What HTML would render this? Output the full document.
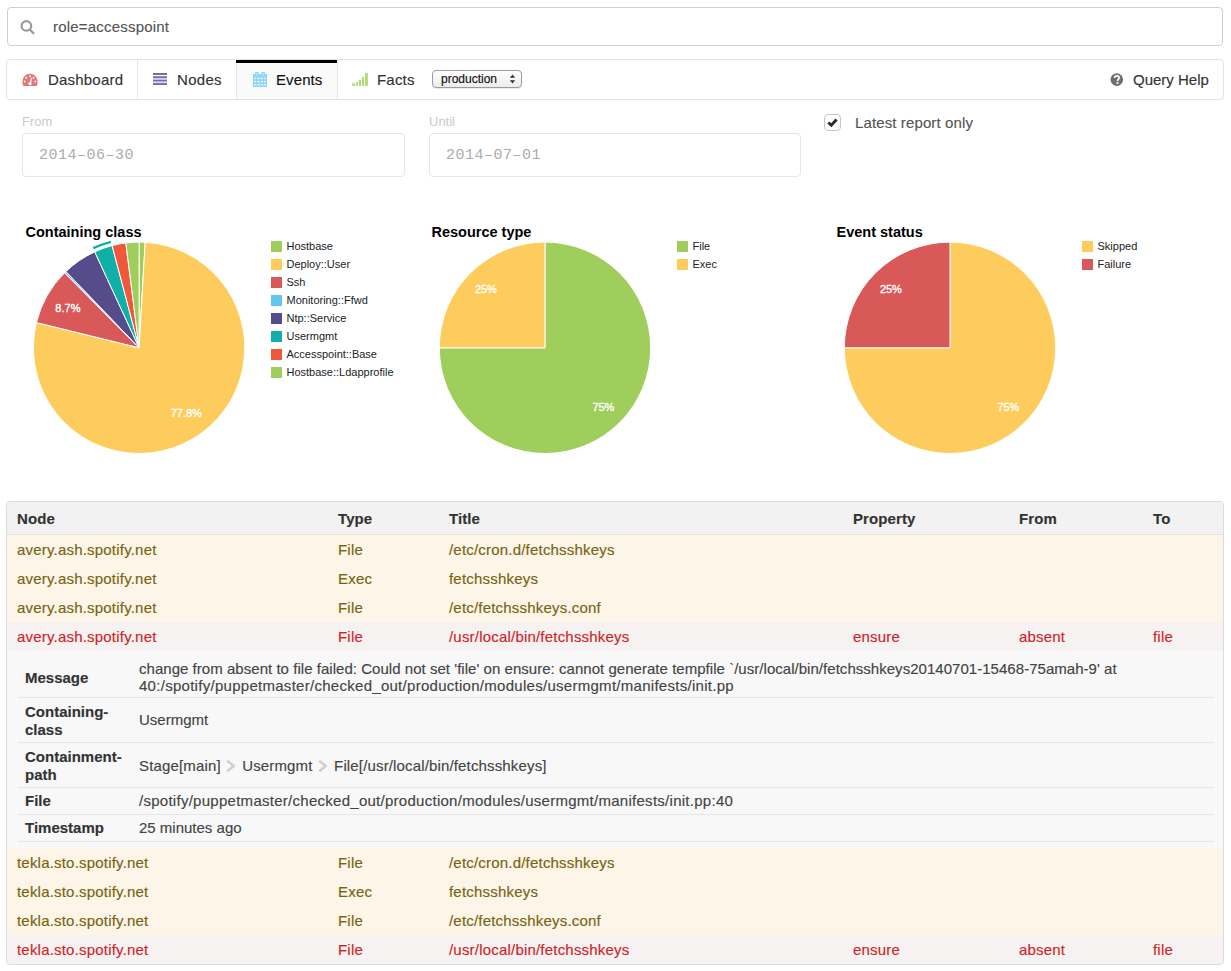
<!DOCTYPE html>
<html><head><meta charset="utf-8">
<style>
*{box-sizing:border-box;margin:0;padding:0}
html,body{width:1231px;height:971px;overflow:hidden;background:#fff}
body{font-family:"Liberation Sans",sans-serif;font-size:15px;color:#333;position:relative;-webkit-text-stroke:0.15px currentColor}
.a{position:absolute;white-space:nowrap}
.t15{font-size:15px;line-height:20px}
#search{left:7px;top:7px;width:1216px;height:39px;border:1px solid #cfcfcf;border-radius:4px}
#nav{left:6px;top:59px;width:1218px;height:41px;border:1px solid #e3e3e3;border-radius:4px;background:#fff}
.sep{position:absolute;top:0;width:1px;height:39px;background:#e7e7e7}
.lbl{font-size:13px;line-height:18px;color:#cacaca;-webkit-text-stroke:0}
.inp{border:1px solid #e6e6e6;border-radius:4px;height:44px}
.mono{font-family:"Liberation Mono",monospace;font-size:15px;line-height:20px;color:#ababab;letter-spacing:0.5px;-webkit-text-stroke:0}
.ctitle{font-weight:bold;font-size:14.5px;line-height:18px;color:#000}
.leg{font-size:11px;line-height:14px;color:#222}
.sw{position:absolute;width:11px;height:11px}
#panel{left:6px;top:501px;width:1218px;height:464px;border:1px solid #dcdcdc;border-radius:4px;overflow:hidden;background:#fff}
.row{position:absolute;left:0;width:1216px;height:29px}
.warn{background:#fcf5e8;color:#776411}
.dang{background:#f7f2f2;color:#cf1f27}
.cell{position:absolute;top:0;line-height:29px;font-size:15px;letter-spacing:0.2px}
.th{font-weight:bold;color:#333;line-height:34px;letter-spacing:0.1px}
.dt{position:absolute;left:11px;width:1194px;border-bottom:1px solid #e6e6e6}
.dk{position:absolute;left:18px;font-weight:bold;font-size:15px;line-height:18px;color:#333}
.chev{display:inline-block;width:9px;height:12px;margin:0 7px 0 5.5px;vertical-align:-1px}
.dv{position:absolute;left:132px;font-size:15px;line-height:18px;color:#444}
.hl{position:absolute;left:11px;width:1196px;height:1px;background:#e6e6e6}
</style></head><body>

<!-- search -->
<div id="search" class="a"></div>
<svg class="a" style="left:18px;top:18px" width="20" height="20" viewBox="0 0 20 20">
  <circle cx="8.4" cy="7.9" r="4.8" fill="none" stroke="#9a9a9a" stroke-width="2.2"/>
  <line x1="11.8" y1="11.4" x2="15.5" y2="15.2" stroke="#9a9a9a" stroke-width="2.2" stroke-linecap="round"/>
</svg>
<div class="a t15" style="left:53px;top:17px;color:#555;letter-spacing:0.2px">role=accesspoint</div>

<!-- nav -->
<div id="nav" class="a">
  <div class="sep" style="left:130px"></div>
  <div class="sep" style="left:229px"></div>
  <div style="position:absolute;left:230px;top:0;width:100px;height:39px;background:#fafafa"></div>
  <div style="position:absolute;left:229px;top:0;width:101px;height:3px;background:#000"></div>
  <div class="sep" style="left:330px"></div>
</div>
<!-- dashboard icon -->
<svg class="a" style="left:22px;top:73px" width="16" height="14" viewBox="0 0 16 14">
  <path d="M1.3 13 C0.6 11.6 0.4 10 0.4 8.4 A7.6 7.6 0 0 1 15.6 8.4 C15.6 10 15.4 11.6 14.7 13 Z" fill="#e27a7a"/>
  <g fill="#fff">
  <rect x="7.2" y="2.5" width="1.7" height="1.6"/>
  <rect x="3.5" y="4" width="1.6" height="1.6"/>
  <rect x="10.8" y="4" width="1.6" height="1.6"/>
  <rect x="1.9" y="7.7" width="1.6" height="1.6"/>
  <rect x="12.5" y="7.7" width="1.6" height="1.6"/>
  <circle cx="8" cy="10.6" r="1.6"/>
  </g>
  <path d="M9.6 4.8 L8.3 10.4" stroke="#fff" stroke-width="1.2"/>
</svg>
<div class="a t15" style="left:48px;top:70px;color:#333;letter-spacing:0.2px">Dashboard</div>
<!-- nodes icon -->
<svg class="a" style="left:153px;top:73px" width="14" height="12" viewBox="0 0 14 12">
  <rect x="0" y="3" width="14" height="9" fill="#dcd9ea"/>
  <rect x="0" y="0" width="14" height="2" fill="#766ea6"/>
  <rect x="0" y="3.3" width="14" height="1.8" fill="#766ea6"/>
  <rect x="0" y="6.8" width="14" height="1.6" fill="#766ea6"/>
  <rect x="0" y="10.1" width="14" height="1.9" fill="#766ea6"/>
</svg>
<div class="a t15" style="left:177px;top:70px;color:#333;letter-spacing:0.3px">Nodes</div>
<!-- events icon -->
<svg class="a" style="left:253px;top:72px" width="14" height="15" viewBox="0 0 14 15">
  <path d="M0 2 H2 V0 H5.5 V2 H8.5 V0 H12 V2 H14 V15 H0 Z" fill="#8fd6f5"/>
  <rect x="3.1" y="1.1" width="0.9" height="2.4" rx="0.45" fill="#d6f0fc"/><rect x="9.9" y="1.1" width="0.9" height="2.4" rx="0.45" fill="#d6f0fc"/>
  <g fill="#e9f7fd">
    <rect x="1.3" y="5.8" width="1.8" height="1.3"/><rect x="4.2" y="5.8" width="2.8" height="1.3"/><rect x="8" y="5.8" width="2" height="1.3"/><rect x="11" y="5.8" width="1.8" height="1.3"/>
    <rect x="1.3" y="9" width="1.8" height="1.3"/><rect x="4.2" y="9" width="2.8" height="1.3"/><rect x="8" y="9" width="2" height="1.3"/><rect x="11" y="9" width="1.8" height="1.3"/>
    <rect x="1.3" y="12.2" width="1.8" height="1.3"/><rect x="4.2" y="12.2" width="2.8" height="1.3"/><rect x="8" y="12.2" width="2" height="1.3"/><rect x="11" y="12.2" width="1.8" height="1.3"/>
  </g>
</svg>
<div class="a t15" style="left:276px;top:70px;color:#111;letter-spacing:0.1px">Events</div>
<!-- facts icon -->
<svg class="a" style="left:352px;top:72px" width="16" height="14" viewBox="0 0 16 14">
  <g fill="#b0da7c">
    <rect x="0.2" y="11.2" width="2.7" height="2.7"/>
    <rect x="3.9" y="10" width="2" height="3.9"/>
    <rect x="6.8" y="8" width="2.2" height="5.9"/>
    <rect x="9.9" y="5" width="2.1" height="8.9"/>
    <rect x="13" y="0.8" width="2.9" height="13.1"/>
  </g>
</svg>
<div class="a t15" style="left:377px;top:70px;color:#333;letter-spacing:0.2px">Facts</div>
<!-- select -->
<div class="a" style="left:432px;top:70px;width:90px;height:18px;border:1px solid #9b9b9b;border-radius:4px;background:linear-gradient(#fff,#ececec);box-shadow:0 1px 0 rgba(0,0,0,0.08)"></div>
<div class="a" style="left:441px;top:71px;font-size:12px;line-height:16px;color:#111">production</div>
<svg class="a" style="left:509px;top:74px" width="7" height="10" viewBox="0 0 7 10">
  <path d="M3.5 0.5 L6.2 3.8 H0.8 Z M3.5 9.5 L6.2 6.2 H0.8 Z" fill="#333"/>
</svg>
<!-- query help -->
<svg class="a" style="left:1110px;top:73px" width="14" height="14" viewBox="0 0 14 14">
  <circle cx="6.8" cy="6.6" r="6.3" fill="#6f6f6f"/>
  <path d="M4.7 5.1 C4.7 3.6 5.7 2.9 6.9 2.9 C8.2 2.9 9.1 3.7 9.1 4.8 C9.1 6.2 7.6 6.4 7.6 7.6 V8" fill="none" stroke="#fff" stroke-width="1.7"/>
  <rect x="6.6" y="9" width="1.8" height="1.8" fill="#fff"/>
</svg>
<div class="a t15" style="left:1133px;top:70px;color:#333">Query Help</div>

<!-- filter form -->
<div class="a lbl" style="left:22px;top:113px">From</div>
<div class="a inp" style="left:22px;top:133px;width:383px"></div>
<div class="a mono" style="left:39px;top:146px">2014&#8211;06&#8211;30</div>
<div class="a lbl" style="left:429px;top:113px">Until</div>
<div class="a inp" style="left:429px;top:133px;width:372px"></div>
<div class="a mono" style="left:446px;top:146px">2014&#8211;07&#8211;01</div>
<div class="a" style="left:824px;top:114px;width:17px;height:17px;border:1px solid #c6c6c6;border-radius:4px;background:#fff"></div>
<svg class="a" style="left:826px;top:116px" width="13" height="13" viewBox="0 0 13 13">
  <path d="M2.3 6.5 L5.3 9.3 L10.6 3.6" fill="none" stroke="#2b2b2b" stroke-width="2.9"/>
</svg>
<div class="a t15" style="left:855px;top:113px;color:#555;letter-spacing:0.12px">Latest report only</div>

<!-- charts placeholder -->
<!-- charts -->
<svg class="a" style="left:0;top:200px" width="1231" height="280" viewBox="0 200 1231 280">
<path d="M139.10 347.80 L139.10 242.10 A105.7 105.7 0 0 1 145.18 242.28 Z" fill="#a0ce5c" stroke="#fff" stroke-width="1" stroke-linejoin="round"/>
<path d="M139.10 347.80 L145.18 242.28 A105.7 105.7 0 1 1 36.45 322.59 Z" fill="#fecc5c" stroke="#fff" stroke-width="1" stroke-linejoin="round"/>
<path d="M139.10 347.80 L36.45 322.59 A105.7 105.7 0 0 1 64.62 272.80 Z" fill="#d95959" stroke="#fff" stroke-width="1" stroke-linejoin="round"/>
<path d="M139.10 347.80 L64.62 272.80 A105.7 105.7 0 0 1 65.94 271.51 Z" fill="#5ec8f0" stroke="#fff" stroke-width="1" stroke-linejoin="round"/>
<path d="M139.10 347.80 L65.94 271.51 A105.7 105.7 0 0 1 94.76 251.85 Z" fill="#564c8b" stroke="#fff" stroke-width="1" stroke-linejoin="round"/>
<path d="M139.10 347.80 L94.76 251.85 A105.7 105.7 0 0 1 112.10 245.61 Z" fill="#10b0a9" stroke="#fff" stroke-width="1" stroke-linejoin="round"/>
<path d="M139.10 347.80 L112.10 245.61 A105.7 105.7 0 0 1 125.85 242.93 Z" fill="#f0583a" stroke="#fff" stroke-width="1" stroke-linejoin="round"/>
<path d="M139.10 347.80 L125.85 242.93 A105.7 105.7 0 0 1 139.10 242.10 Z" fill="#a0ce5c" stroke="#fff" stroke-width="1" stroke-linejoin="round"/>
<path d="M93.26 248.14 A109.7 109.7 0 0 1 110.89 241.79" fill="none" stroke="#10b0a9" stroke-width="2.3"/>
<text x="67.9" y="312.0" text-anchor="middle" font-family="Liberation Sans" font-size="11" fill="#fff" stroke="#fff" stroke-width="0.35">8.7%</text>
<text x="186.3" y="416.8" text-anchor="middle" font-family="Liberation Sans" font-size="11" fill="#fff" stroke="#fff" stroke-width="0.35">77.8%</text>
<text x="25.5" y="237" font-family="Liberation Sans" font-weight="bold" font-size="14.5" fill="#000">Containing class</text>
<rect x="271" y="241" width="11" height="11" fill="#a0ce5c"/>
<text x="286.5" y="250" font-family="Liberation Sans" font-size="11" fill="#222">Hostbase</text>
<rect x="271" y="259" width="11" height="11" fill="#fecc5c"/>
<text x="286.5" y="268" font-family="Liberation Sans" font-size="11" fill="#222">Deploy::User</text>
<rect x="271" y="277" width="11" height="11" fill="#d95959"/>
<text x="286.5" y="286" font-family="Liberation Sans" font-size="11" fill="#222">Ssh</text>
<rect x="271" y="295" width="11" height="11" fill="#5ec8f0"/>
<text x="286.5" y="304" font-family="Liberation Sans" font-size="11" fill="#222">Monitoring::Ffwd</text>
<rect x="271" y="313" width="11" height="11" fill="#564c8b"/>
<text x="286.5" y="322" font-family="Liberation Sans" font-size="11" fill="#222">Ntp::Service</text>
<rect x="271" y="331" width="11" height="11" fill="#10b0a9"/>
<text x="286.5" y="340" font-family="Liberation Sans" font-size="11" fill="#222">Usermgmt</text>
<rect x="271" y="349" width="11" height="11" fill="#f0583a"/>
<text x="286.5" y="358" font-family="Liberation Sans" font-size="11" fill="#222">Accesspoint::Base</text>
<rect x="271" y="367" width="11" height="11" fill="#a0ce5c"/>
<text x="286.5" y="376" font-family="Liberation Sans" font-size="11" fill="#222">Hostbase::Ldapprofile</text>
<path d="M545.00 347.80 L545.00 242.10 A105.7 105.7 0 1 1 439.30 347.80 Z" fill="#a0ce5c" stroke="#fff" stroke-width="1" stroke-linejoin="round"/>
<path d="M545.00 347.80 L439.30 347.80 A105.7 105.7 0 0 1 545.00 242.10 Z" fill="#fecc5c" stroke="#fff" stroke-width="1" stroke-linejoin="round"/>
<text x="485.9" y="293.2" text-anchor="middle" font-family="Liberation Sans" font-size="11" fill="#fff" stroke="#fff" stroke-width="0.35">25%</text>
<text x="603.4" y="411.2" text-anchor="middle" font-family="Liberation Sans" font-size="11" fill="#fff" stroke="#fff" stroke-width="0.35">75%</text>
<text x="431.5" y="237" font-family="Liberation Sans" font-weight="bold" font-size="14.5" fill="#000">Resource type</text>
<rect x="677" y="241" width="11" height="11" fill="#a0ce5c"/>
<text x="692.5" y="250" font-family="Liberation Sans" font-size="11" fill="#222">File</text>
<rect x="677" y="259" width="11" height="11" fill="#fecc5c"/>
<text x="692.5" y="268" font-family="Liberation Sans" font-size="11" fill="#222">Exec</text>
<path d="M950.00 347.80 L950.00 242.10 A105.7 105.7 0 1 1 844.30 347.80 Z" fill="#fecc5c" stroke="#fff" stroke-width="1" stroke-linejoin="round"/>
<path d="M950.00 347.80 L844.30 347.80 A105.7 105.7 0 0 1 950.00 242.10 Z" fill="#d95959" stroke="#fff" stroke-width="1" stroke-linejoin="round"/>
<text x="890.9" y="293.2" text-anchor="middle" font-family="Liberation Sans" font-size="11" fill="#fff" stroke="#fff" stroke-width="0.35">25%</text>
<text x="1008.4" y="411.2" text-anchor="middle" font-family="Liberation Sans" font-size="11" fill="#fff" stroke="#fff" stroke-width="0.35">75%</text>
<text x="836.5" y="237" font-family="Liberation Sans" font-weight="bold" font-size="14.5" fill="#000">Event status</text>
<rect x="1082" y="241" width="11" height="11" fill="#fecc5c"/>
<text x="1097.5" y="250" font-family="Liberation Sans" font-size="11" fill="#222">Skipped</text>
<rect x="1082" y="259" width="11" height="11" fill="#d95959"/>
<text x="1097.5" y="268" font-family="Liberation Sans" font-size="11" fill="#222">Failure</text>
</svg>
<!-- /charts -->

<!-- table -->
<div id="panel" class="a">
<div class="row" style="top:0;height:33px;background:#f2f2f2;border-bottom:1px solid #e9e2d5">
  <div class="cell th" style="left:10px">Node</div>
  <div class="cell th" style="left:331px">Type</div>
  <div class="cell th" style="left:442px">Title</div>
  <div class="cell th" style="left:846px">Property</div>
  <div class="cell th" style="left:1012px">From</div>
  <div class="cell th" style="left:1146px">To</div>
</div>
<div class="row warn" style="top:33px">
  <div class="cell" style="left:10px">avery.ash.spotify.net</div>
  <div class="cell" style="left:331px">File</div>
  <div class="cell" style="left:442px">/etc/cron.d/fetchsshkeys</div>
</div>
<div class="row warn" style="top:62px">
  <div class="cell" style="left:10px">avery.ash.spotify.net</div>
  <div class="cell" style="left:331px">Exec</div>
  <div class="cell" style="left:442px">fetchsshkeys</div>
</div>
<div class="row warn" style="top:91px">
  <div class="cell" style="left:10px">avery.ash.spotify.net</div>
  <div class="cell" style="left:331px">File</div>
  <div class="cell" style="left:442px">/etc/fetchsshkeys.conf</div>
</div>
<div class="row dang" style="top:120px">
  <div class="cell" style="left:10px">avery.ash.spotify.net</div>
  <div class="cell" style="left:331px">File</div>
  <div class="cell" style="left:442px">/usr/local/bin/fetchsshkeys</div>
  <div class="cell" style="left:846px">ensure</div>
  <div class="cell" style="left:1012px">absent</div>
  <div class="cell" style="left:1146px">file</div>
</div>
<div class="row" style="top:149px;height:197px;background:#f8f8f8">
  <div class="hl" style="top:46px"></div>
  <div class="hl" style="top:91px"></div>
  <div class="hl" style="top:136px"></div>
  <div class="hl" style="top:163px"></div>
  <div class="hl" style="top:190px"></div>
  <div class="dk" style="top:17.5px">Message</div>
  <div class="dv" style="top:9.2px;line-height:17px"><span style='letter-spacing:0.035px'>change from absent to file failed: Could not set 'file' on ensure: cannot generate tempfile `/usr/local/bin/fetchsshkeys20140701-15468-75amah-9' at</span><br><span style='letter-spacing:0.28px'>40:/spotify/puppetmaster/checked_out/production/modules/usermgmt/manifests/init.pp</span></div>
  <div class="dk" style="top:51.5px">Containing-<br>class</div>
  <div class="dv" style="top:59.8px;line-height:18px">Usermgmt</div>
  <div class="dk" style="top:96.5px">Containment-<br>path</div>
  <div class="dv" style="top:105.7px;line-height:18px;letter-spacing:0.15px">Stage[main]<svg class="chev" width="9" height="12" viewBox="0 0 8 12" preserveAspectRatio="none"><path d="M1 0.8 L7 6 L1 11.2" fill="none" stroke="#d0d0d0" stroke-width="2.4"/></svg>Usermgmt<svg class="chev" width="9" height="12" viewBox="0 0 8 12" preserveAspectRatio="none"><path d="M1 0.8 L7 6 L1 11.2" fill="none" stroke="#d0d0d0" stroke-width="2.4"/></svg>File[/usr/local/bin/fetchsshkeys]</div>
  <div class="dk" style="top:141.3px">File</div>
  <div class="dv" style="top:141.3px;line-height:18px;letter-spacing:0.27px">/spotify/puppetmaster/checked_out/production/modules/usermgmt/manifests/init.pp:40</div>
  <div class="dk" style="top:168.3px">Timestamp</div>
  <div class="dv" style="top:168.3px;line-height:18px">25 minutes ago</div>
</div>
<div class="row warn" style="top:346px">
  <div class="cell" style="left:10px">tekla.sto.spotify.net</div>
  <div class="cell" style="left:331px">File</div>
  <div class="cell" style="left:442px">/etc/cron.d/fetchsshkeys</div>
</div>
<div class="row warn" style="top:375px">
  <div class="cell" style="left:10px">tekla.sto.spotify.net</div>
  <div class="cell" style="left:331px">Exec</div>
  <div class="cell" style="left:442px">fetchsshkeys</div>
</div>
<div class="row warn" style="top:404px">
  <div class="cell" style="left:10px">tekla.sto.spotify.net</div>
  <div class="cell" style="left:331px">File</div>
  <div class="cell" style="left:442px">/etc/fetchsshkeys.conf</div>
</div>
<div class="row dang" style="top:433px">
  <div class="cell" style="left:10px">tekla.sto.spotify.net</div>
  <div class="cell" style="left:331px">File</div>
  <div class="cell" style="left:442px">/usr/local/bin/fetchsshkeys</div>
  <div class="cell" style="left:846px">ensure</div>
  <div class="cell" style="left:1012px">absent</div>
  <div class="cell" style="left:1146px">file</div>
</div>
</div>
<!-- /table -->

</body></html>
